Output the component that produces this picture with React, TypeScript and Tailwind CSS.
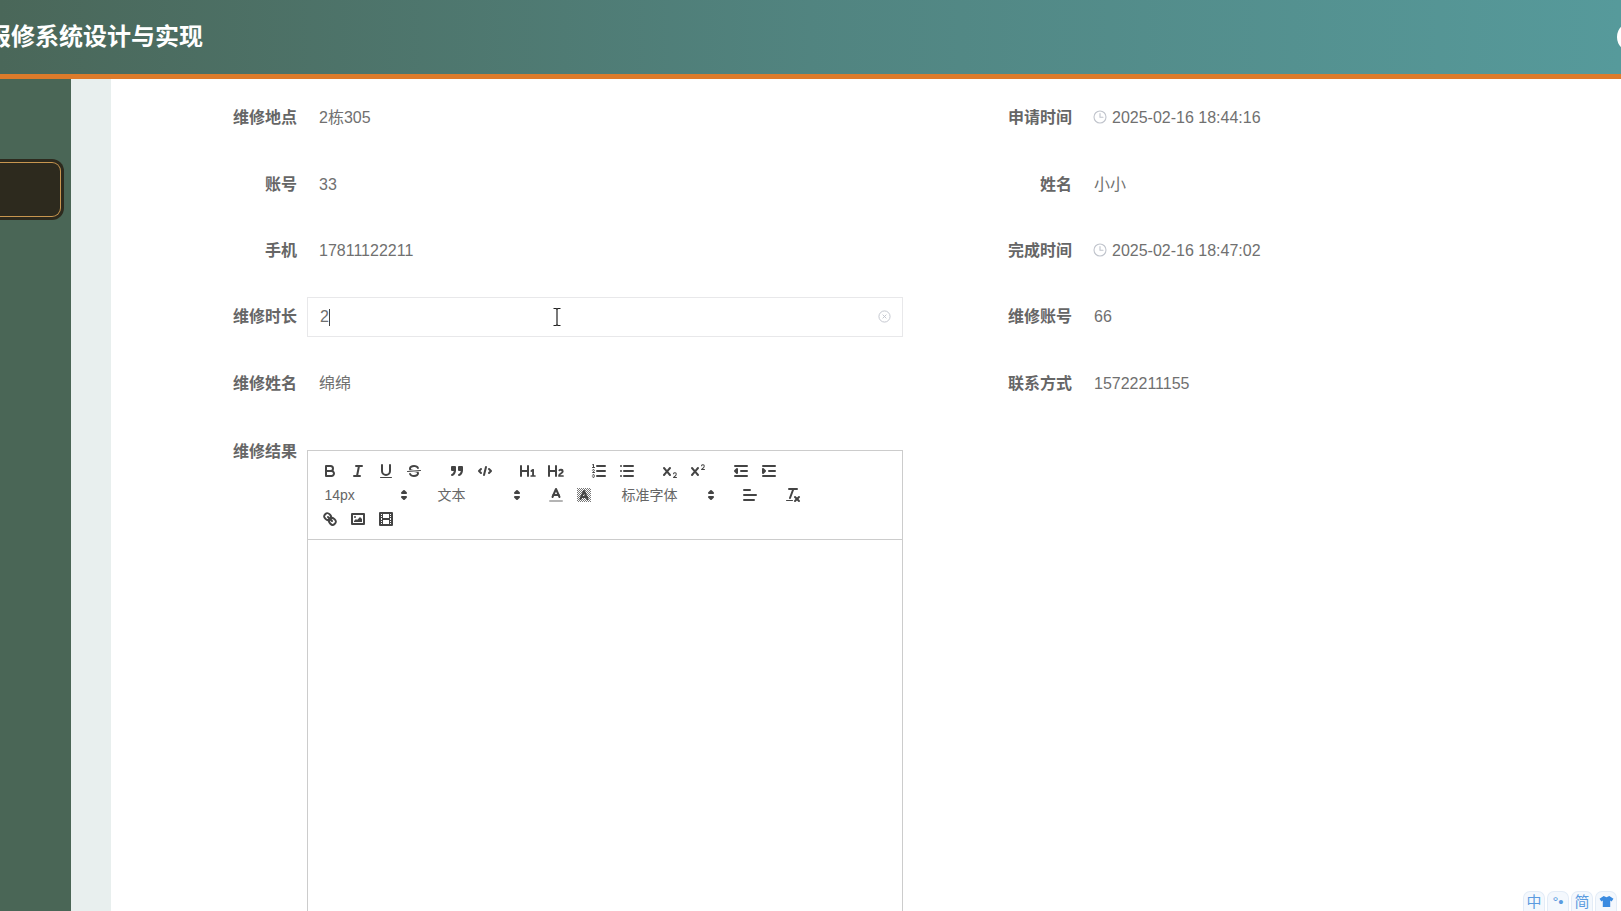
import React from "react";

const F = { fill: "#444", stroke: "none" } as const;
const T = { strokeWidth: 1 } as const;
const FS = { fill: "#444" } as const;

const icons: Record<string, React.ReactNode> = {
  bold: (<><path d="M5,4H9.5A2.5,2.5,0,0,1,12,6.5v0A2.5,2.5,0,0,1,9.5,9H5A0,0,0,0,1,5,9V4A0,0,0,0,1,5,4Z" /><path d="M5,9h5.5A2.5,2.5,0,0,1,13,11.5v0A2.5,2.5,0,0,1,10.5,14H5a0,0,0,0,1,0,0V9A0,0,0,0,1,5,9Z" /></>),
  italic: (<><line x1="7" x2="13" y1="4" y2="4" /><line x1="5" x2="11" y1="14" y2="14" /><line x1="8" x2="10" y1="14" y2="4" /></>),
  underline: (<><path d="M5,3V9a4.012,4.012,0,0,0,4,4H9a4.012,4.012,0,0,0,4-4V3" /><rect {...F} height="1" rx=".5" ry=".5" width="12" x="3" y="15" /></>),
  strike: (<><line {...T} x1="15.5" x2="2.5" y1="8.5" y2="9.5" /><path {...F} d="M9.007,8C6.542,7.791,6,7.519,6,6.5,6,5.792,7.283,5,9,5c1.571,0,2.765.679,2.969,1.309a1,1,0,0,0,1.9-.617C13.356,4.106,11.354,3,9,3,6.2,3,4,4.538,4,6.5a3.2,3.2,0,0,0,.5,1.843Z" /><path {...F} d="M8.984,10C11.457,10.208,12,10.479,12,11.5c0,.708-1.283,1.5-3,1.5-1.571,0-2.765-.679-2.969-1.309a1,1,0,1,0-1.9.617C4.644,13.894,6.646,15,9,15c2.8,0,5-1.538,5-3.5a3.2,3.2,0,0,0-.5-1.843Z" /></>),
  quote: (<><rect {...FS} height="3" width="3" x="4" y="5" /><rect {...FS} height="3" width="3" x="11" y="5" /><path {...FS} d="M7,8c0,4.031-3,5-3,5" /><path {...FS} d="M14,8c0,4.031-3,5-3,5" /></>),
  code: (<><polyline points="5 7 3 9 5 11" /><polyline points="13 7 15 9 13 11" /><line x1="10" x2="8" y1="5" y2="13" /></>),
  h1: <path {...F} d="M10,4V14a1,1,0,0,1-2,0V10H3v4a1,1,0,0,1-2,0V4A1,1,0,0,1,3,4V8H8V4a1,1,0,0,1,2,0Zm6.06787,9.209H14.98975V7.59863a.54085.54085,0,0,0-.605-.60547h-.62744a1.01119,1.01119,0,0,0-.748.29688L11.645,8.56641a.5435.5435,0,0,0-.022.8584l.28613.30762a.53861.53861,0,0,0,.84717.0332l.09912-.08789a1.2137,1.2137,0,0,0,.2417-.35254h.02246s-.01123.30859-.01123.60547V13.209H12.041a.54085.54085,0,0,0-.605.60547v.43945a.54085.54085,0,0,0,.605.60547h4.02686a.54085.54085,0,0,0,.605-.60547v-.43945A.54085.54085,0,0,0,16.06787,13.209Z" />,
  h2: <path {...F} d="M16.73975,13.81445v.43945a.54085.54085,0,0,1-.605.60547H11.855a.58392.58392,0,0,1-.64893-.60547V14.0127c0-2.90527,3.39941-3.42187,3.39941-4.55469a.77675.77675,0,0,0-.84717-.78125,1.17684,1.17684,0,0,0-.83594.38477c-.2749.26367-.561.374-.85791.13184l-.4292-.34082c-.30811-.24219-.38525-.51758-.1543-.81445a2.97155,2.97155,0,0,1,2.45361-1.17676,2.45393,2.45393,0,0,1,2.68408,2.40918c0,2.45312-3.1792,2.92676-3.27832,3.93848h2.79443A.54085.54085,0,0,1,16.73975,13.81445ZM9,3A.99974.99974,0,0,0,8,4V8H3V4A1,1,0,0,0,1,4V14a1,1,0,0,0,2,0V10H8v4a1,1,0,0,0,2,0V4A.99974.99974,0,0,0,9,3Z" />,
  ol: (<><line x1="7" x2="15" y1="4" y2="4" /><line x1="7" x2="15" y1="9" y2="9" /><line x1="7" x2="15" y1="14" y2="14" /><line {...T} x1="2.5" x2="4.5" y1="5.5" y2="5.5" /><path {...F} d="M3.5,6A0.5,0.5,0,0,1,3,5.5V3.085l-0.276.138A0.5,0.5,0,0,1,2.053,3c-0.124-.247-0.023-0.324.224-0.447l1-.5A0.5,0.5,0,0,1,4,2.5v3A0.5,0.5,0,0,1,3.5,6Z" /><path {...T} d="M4.5,10.5h-2c0-.234,1.85-1.076,1.85-2.234A0.959,0.959,0,0,0,2.5,8.156" /><path {...T} d="M2.5,14.846a0.959,0.959,0,0,0,1.85-.109A0.7,0.7,0,0,0,3.75,14a0.688,0.688,0,0,0,.6-0.736,0.959,0.959,0,0,0-1.85-.109" /></>),
  ul: (<><line x1="6" x2="15" y1="4" y2="4" /><line x1="6" x2="15" y1="9" y2="9" /><line x1="6" x2="15" y1="14" y2="14" /><line x1="3" x2="3" y1="4" y2="4" /><line x1="3" x2="3" y1="9" y2="9" /><line x1="3" x2="3" y1="14" y2="14" /></>),
  sub: (<><path {...F} d="M15.5,15H13.861a3.858,3.858,0,0,0,1.914-2.975,1.8,1.8,0,0,0-1.6-1.751A1.921,1.921,0,0,0,12.021,11.7a0.50013,0.50013,0,1,0,.957.291h0a0.914,0.914,0,0,1,1.053-.725,0.81,0.81,0,0,1,.744.762c0,1.076-1.16971,1.86982-1.93971,2.43082A1.45639,1.45639,0,0,0,12,15.5a0.5,0.5,0,0,0,.5.5h3A0.5,0.5,0,0,0,15.5,15Z" /><path {...F} d="M9.65,5.241a1,1,0,0,0-1.409.108L6,7.964,3.759,5.349A1,1,0,0,0,2.192,6.59178Q2.21541,6.6213,2.241,6.649L4.684,9.5,2.241,12.35A1,1,0,0,0,3.71,13.70722q0.02557-.02768.049-0.05722L6,11.036,8.241,13.65a1,1,0,1,0,1.567-1.24277Q9.78459,12.3777,9.759,12.35L7.316,9.5,9.759,6.651A1,1,0,0,0,9.65,5.241Z" /></>),
  sup: (<><path {...F} d="M15.5,7H13.861a4.015,4.015,0,0,0,1.914-2.975,1.8,1.8,0,0,0-1.6-1.751A1.922,1.922,0,0,0,12.021,3.7a0.5,0.5,0,1,0,.957.291,0.917,0.917,0,0,1,1.053-.725,0.81,0.81,0,0,1,.744.762c0,1.077-1.164,1.925-1.934,2.486A1.423,1.423,0,0,0,12,7.5a0.5,0.5,0,0,0,.5.5h3A0.5,0.5,0,0,0,15.5,7Z" /><path {...F} d="M9.651,5.241a1,1,0,0,0-1.41.108L6,7.964,3.759,5.349a1,1,0,1,0-1.519,1.3L4.683,9.5,2.241,12.35a1,1,0,1,0,1.519,1.3L6,11.036l2.241,2.614a1,1,0,0,0,1.519-1.3L7.317,9.5,9.759,6.651A1,1,0,0,0,9.651,5.241Z" /></>),
  outdent: (<><line x1="3" x2="15" y1="14" y2="14" /><line x1="3" x2="15" y1="4" y2="4" /><line x1="9" x2="15" y1="9" y2="9" /><polyline {...FS} points="5 7 5 11 3 9 5 7" /></>),
  indent: (<><line x1="3" x2="15" y1="14" y2="14" /><line x1="3" x2="15" y1="4" y2="4" /><line x1="9" x2="15" y1="9" y2="9" /><polyline {...FS} points="3 7 3 11 5 9 3 7" /></>),
  color: (<><line opacity="0.4" x1="3" x2="15" y1="15" y2="15" /><polyline points="5.5 11 9 3 12.5 11" /><line x1="11.63" x2="6.38" y1="9" y2="9" /></>),
  background: (<><rect x="2" y="2" width="14" height="14" fill="url(#checker)" stroke="none" /><polyline points="5.5 13 9 5 12.5 13" /><line x1="11.63" x2="6.38" y1="11" y2="11" /></>),
  align: (<><line x1="3" x2="15" y1="9" y2="9" /><line x1="3" x2="13" y1="14" y2="14" /><line x1="3" x2="9" y1="4" y2="4" /></>),
  clean: (<><line x1="5" x2="13" y1="3" y2="3" /><line x1="6" x2="9.35" y1="12" y2="3" /><line x1="11" x2="15" y1="11" y2="15" /><line x1="15" x2="11" y1="11" y2="15" /><rect {...F} height="1" rx="0.5" ry="0.5" width="7" x="2" y="14" /></>),
  link: (<><line x1="7" x2="11" y1="7" y2="11" /><path d="M8.9,4.577a3.476,3.476,0,0,1,.36,4.679A3.476,3.476,0,0,1,4.577,8.9C3.185,7.5,2.035,6.4,4.217,4.217S7.5,3.185,8.9,4.577Z" /><path d="M13.423,9.1a3.476,3.476,0,0,0-4.679-.36,3.476,3.476,0,0,0,.36,4.679c1.392,1.392,2.5,2.542,4.679.36S14.815,10.5,13.423,9.1Z" /></>),
  image: (<><rect height="10" width="12" x="3" y="4" /><circle {...F} cx="6" cy="7" r="1" /><polyline {...F} points="5 12 5 11 7 9 8 10 11 7 13 9 13 12 5 12" /></>),
  video: (<><rect height="12" width="12" x="3" y="3" /><rect {...F} height="12" width="1" x="5" y="3" /><rect {...F} height="12" width="1" x="12" y="3" /><rect {...F} height="2" width="8" x="5" y="8" /><rect {...F} height="1" width="3" x="3" y="5" /><rect {...F} height="1" width="3" x="3" y="7" /><rect {...F} height="1" width="3" x="3" y="10" /><rect {...F} height="1" width="3" x="3" y="12" /><rect {...F} height="1" width="3" x="12" y="5" /><rect {...F} height="1" width="3" x="12" y="7" /><rect {...F} height="1" width="3" x="12" y="10" /><rect {...F} height="1" width="3" x="12" y="12" /></>),
};

function Glyph({ name }: { name: string }) {
  return (
    <svg viewBox="0 0 18 18" className="w-[18px] h-[18px]" fill="none" stroke="#444" strokeWidth={2} strokeLinecap="round" strokeLinejoin="round">
      {icons[name]}
    </svg>
  );
}

function Btn({ name }: { name: string }) {
  return (
    <span className="w-[28px] h-[24px] flex items-center justify-center">
      <Glyph name={name} />
    </span>
  );
}

function Group({ names }: { names: string[] }) {
  return (
    <span className="flex mr-[15px]">
      {names.map((n) => (
        <Btn key={n} name={n} />
      ))}
    </span>
  );
}

function Picker({ label, w }: { label: string; w: string }) {
  return (
    <span className={`${w} h-[24px] flex items-center justify-between pl-[8.5px] pr-[1px] mr-[15px] text-[14px] text-[#666]`}>
      <span className="pt-[1px]">{label}</span>
      <svg viewBox="0 0 18 18" className="w-[18px] h-[18px]" fill="none" stroke="#444" strokeWidth={2} strokeLinecap="round" strokeLinejoin="round">
        <polygon points="7 11 9 13 11 11 7 11" />
        <polygon points="7 7 9 5 11 7 7 7" />
      </svg>
    </span>
  );
}

function Clock() {
  return (
    <svg viewBox="0 0 14 14" className="w-[14px] h-[14px] -ml-[1px] mr-[5px] -mt-[2px]" fill="none" stroke="#c0c4cc" strokeWidth={1.1} strokeLinecap="round">
      <circle cx="7" cy="7" r="6" />
      <path d="M7 3.5V7.3H10" />
    </svg>
  );
}

function Label({ text, width, extra = "" }: { text: string; width: string; extra?: string }) {
  return <div className={`${width} ${extra} shrink-0 text-right font-bold text-[16px] leading-[24px] text-[#666]`}>{text}</div>;
}

function RowPair({
  l,
  lv,
  r,
  rv,
  time,
  input,
}: {
  l: string;
  lv?: string;
  r: string;
  rv: string;
  time?: boolean;
  input?: boolean;
}) {
  return (
    <div className="flex items-center h-[66.4px]">
      <Label text={l} width="w-[186px]" />
      <div className="w-[596px] ml-[10px] shrink-0">
        {input ? (
          <div className="relative h-[40px] border border-[#e8e8ea] flex items-center px-[12px] text-[16px] text-[#707070]">
            <span>2</span>
            <span className="w-px h-[17px] bg-[#444]" />
            <svg viewBox="0 0 14 14" className="w-[13px] h-[13px] absolute right-[11px] top-[12px]" fill="none" stroke="#c0c4cc" strokeWidth={1}>
              <circle cx="7" cy="7" r="6" />
              <path d="M5 5L9 9M9 5L5 9" />
            </svg>
          </div>
        ) : (
          <div className="pl-[12px] text-[16px] text-[#707070]">{lv}</div>
        )}
      </div>
      <Label text={r} width="w-[169px]" />
      <div className="ml-[22px] flex items-center text-[16px] text-[#707070]">
        {time && <Clock />}
        <span>{rv}</span>
      </div>
    </div>
  );
}

export default function App() {
  return (
    <div className="relative h-[911px] w-[1621px] overflow-hidden bg-white flex flex-col [font-family:'Liberation_Sans','Noto_Sans_CJK_SC',sans-serif]">
      <header className="h-[79px] shrink-0 border-b-[5px] border-[#dd7b2b] bg-gradient-to-r from-[#4a6759] via-[#518480] to-[#569a9b] flex items-center justify-between">
        <h1 className="-ml-[13px] text-white font-bold text-[24px] leading-[30px] whitespace-nowrap">报修系统设计与实现</h1>
        <div className="w-[30px] h-[30px] rounded-full bg-white -mr-[26px] shrink-0" />
      </header>
      <div className="flex-1 flex min-h-0">
        <aside className="w-[71px] shrink-0 bg-[#4a6656] pt-[80px]">
          <div className="w-[64px] h-[61px] bg-[#2d2a1e] rounded-r-[12px] py-[3px] pr-[3px]">
            <div className="h-full border border-l-0 border-[#c8964f] rounded-r-[9px]" />
          </div>
        </aside>
        <div className="w-[40px] shrink-0 bg-[#e8efee]" />
        <main className="flex-1 pt-[6px] overflow-hidden">
          <RowPair l="维修地点" lv="2栋305" r="申请时间" rv="2025-02-16 18:44:16" time />
          <RowPair l="账号" lv="33" r="姓名" rv="小小" />
          <RowPair l="手机" lv="17811122211" r="完成时间" rv="2025-02-16 18:47:02" time />
          <RowPair l="维修时长" input r="维修账号" rv="66" />
          <RowPair l="维修姓名" lv="绵绵" r="联系方式" rv="15722211155" />
          <div className="flex items-start mt-[33px]">
            <Label text="维修结果" width="w-[186px]" extra="-mt-[10px]" />
            <div className="w-[596px] ml-[10px] shrink-0 border border-[#ccc]">
              <div className="p-[8px] flex flex-wrap border-b border-[#ccc]">
                <Group names={["bold", "italic", "underline", "strike"]} />
                <Group names={["quote", "code"]} />
                <Group names={["h1", "h2"]} />
                <Group names={["ol", "ul"]} />
                <Group names={["sub", "sup"]} />
                <Group names={["outdent", "indent"]} />
                <Picker label="14px" w="w-[98px]" />
                <Picker label="文本" w="w-[98px]" />
                <Group names={["color", "background"]} />
                <Picker label="标准字体" w="w-[108px]" />
                <Group names={["align"]} />
                <Group names={["clean"]} />
                <Group names={["link", "image", "video"]} />
              </div>
              <div className="h-[500px]" />
            </div>
          </div>
        </main>
      </div>

      <svg width="0" height="0" className="absolute">
        <defs>
          <pattern id="checker" width="2" height="2" patternUnits="userSpaceOnUse">
            <rect width="1" height="1" fill="#777" />
            <rect x="1" y="1" width="1" height="1" fill="#777" />
          </pattern>
        </defs>
      </svg>

      {/* text cursor over the input */}
      <svg viewBox="0 0 10 20" className="absolute left-[552px] top-[307px] w-[10px] h-[20px]" fill="none" stroke="#222" strokeWidth={1.2}>
        <path d="M1.5 1.5H4.2L5 2.4L5.8 1.5H8.5M5 2.4V17.6M1.5 18.5H4.2L5 17.6L5.8 18.5H8.5" />
      </svg>

      {/* input-method bar */}
      <div className="absolute left-[1523px] top-[891px] flex gap-[2px]">
        {["中", "°•", "简"].map((t) => (
          <span key={t} className="w-[22px] h-[20px] rounded-t-[7px] border border-b-0 border-[#e3ecf7] bg-[#f4f8fd] text-[#5b9be0] text-[15px] leading-[19px] text-center">
            {t}
          </span>
        ))}
        <span className="w-[22px] h-[20px] rounded-t-[7px] border border-b-0 border-[#e3ecf7] bg-[#f4f8fd] flex items-center justify-center">
          <svg viewBox="0 0 16 14" className="w-[15px] h-[13px]" fill="#3b8be0">
            <path d="M5 1L8 2.5L11 1L15.5 4L13.5 7L12 6V13H4V6L2.5 7L0.5 4Z" />
          </svg>
        </span>
      </div>
    </div>
  );
}
